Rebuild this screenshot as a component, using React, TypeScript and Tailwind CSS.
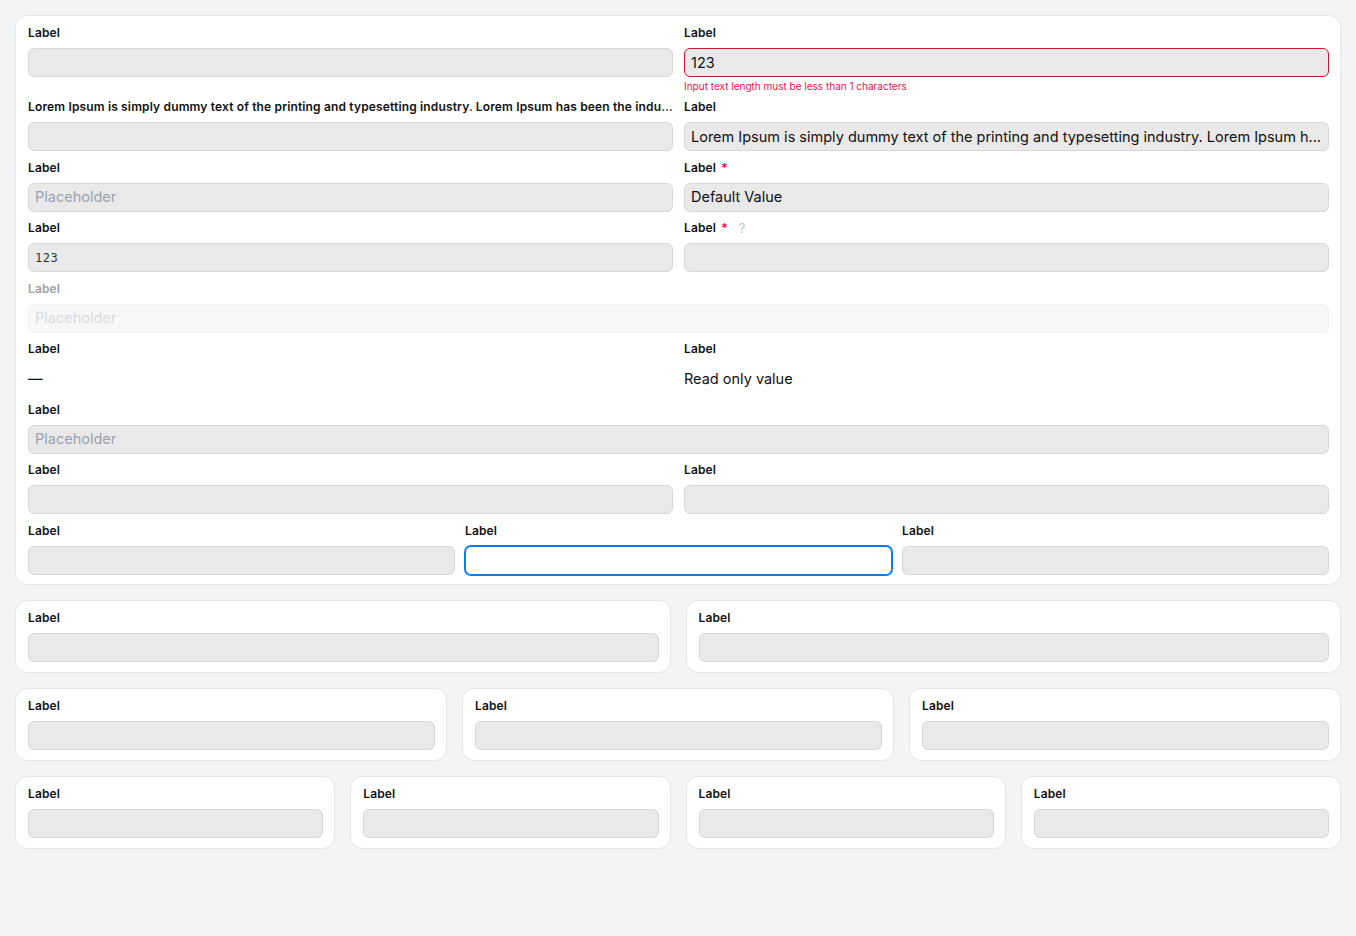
import React from "react";

const FONT = { fontFamily: "Inter, 'Noto Sans', 'Liberation Sans', sans-serif" };

const LONG =
  "Lorem Ipsum is simply dummy text of the printing and typesetting industry. Lorem Ipsum has been the industry's standard dummy text ever since the 1500s";

interface FieldProps {
  label?: string;
  required?: boolean;
  help?: boolean;
  disabled?: boolean;
  value?: string;
  placeholder?: string;
  error?: string;
  readOnly?: boolean;
  focused?: boolean;
  mono?: boolean;
  className?: string;
}

function Field({
  label = "Label",
  required,
  help,
  disabled,
  value,
  placeholder,
  error,
  readOnly,
  focused,
  mono,
  className = "",
}: FieldProps) {
  const box = [
    "h-[29px] rounded-[6px] border px-[6px] flex items-center min-w-0",
    disabled
      ? "bg-[#f7f7f7] border-[#f2f2f2]"
      : focused
        ? "bg-white border-[#0a7cf2] shadow-[0_0_0_1px_#0a7cf2]"
        : error
          ? "bg-[#e9e9e9] border-[#d0162b]"
          : "bg-[#e9e9e9] border-[#d8d8d8]",
  ].join(" ");

  return (
    <div className={`flex flex-col min-w-0 ${className}`}>
      <div
        className={`h-4 leading-4 text-xs tracking-[0.15px] font-semibold truncate flex items-center ${
          disabled ? "text-[#a0a0a0]" : "text-[#111]"
        }`}
      >
        <span className="truncate">{label}</span>
        {required && <span className="ml-[5px] text-[#e8004f]">*</span>}
        {help && (
          <span className="ml-[11px] text-[#c2c2c2] font-normal text-[13px]">?</span>
        )}
      </div>
      {readOnly ? (
        <div className="mt-[7px] h-[29px] flex items-center text-[14.5px] text-[#111]">
          {value}
        </div>
      ) : (
        <div className={`mt-[7px] ${box}`}>
          {value ? (
            <span
              className={`truncate ${
                mono ? "text-[12px] text-[#333] tracking-[0.5px]" : "text-[14.5px] text-[#111]"
              }`}
              style={mono ? { fontFamily: "'DejaVu Sans Mono', monospace" } : undefined}
            >
              {value}
            </span>
          ) : (
            <span
              className={`text-[14.5px] ${disabled ? "text-[#d8dce2]" : "text-[#9aa3af]"}`}
            >
              {placeholder}
            </span>
          )}
        </div>
      )}
      {error && (
        <div className="mt-[3px] -mb-[1.5px] text-[10px] leading-[12px] text-[#e8124f]">
          {error}
        </div>
      )}
    </div>
  );
}

function Card({ children, className = "" }: { children: React.ReactNode; className?: string }) {
  return (
    <div
      className={`bg-white border border-[#e6e6e6] rounded-[12px] pl-3 pr-[11px] pt-[9px] min-w-0 ${className}`}
    >
      {children}
    </div>
  );
}

function SmallCard() {
  return (
    <Card className="pb-[10px]">
      <Field />
    </Card>
  );
}

export default function App() {
  return (
    <div className="min-h-[936px] bg-[#f3f4f6] p-[15px] flex flex-col gap-[15px]" style={FONT}>
      <Card className="pb-[9.5px]">
        <div className="grid grid-cols-2 gap-x-[11px] gap-y-[8.5px]">
          <Field />
          <Field value="123" error="Input text length must be less than 1 characters" />
          <Field label={LONG} />
          <Field value={LONG} />
          <Field placeholder="Placeholder" />
          <Field required value="Default Value" />
          <Field value="123" mono />
          <Field required help />
          <Field disabled placeholder="Placeholder" className="col-span-2" />
          <Field readOnly value="—" />
          <Field readOnly value="Read only value" />
          <Field placeholder="Placeholder" className="col-span-2" />
          <Field />
          <Field />
          <div className="col-span-2 grid grid-cols-3 gap-x-[10px]">
            <Field />
            <Field focused />
            <Field />
          </div>
        </div>
      </Card>

      <div className="grid grid-cols-2 gap-[15px]">
        <SmallCard />
        <SmallCard />
      </div>

      <div className="grid grid-cols-3 gap-[15px]">
        <SmallCard />
        <SmallCard />
        <SmallCard />
      </div>

      <div className="grid grid-cols-4 gap-[15px]">
        <SmallCard />
        <SmallCard />
        <SmallCard />
        <SmallCard />
      </div>
    </div>
  );
}
